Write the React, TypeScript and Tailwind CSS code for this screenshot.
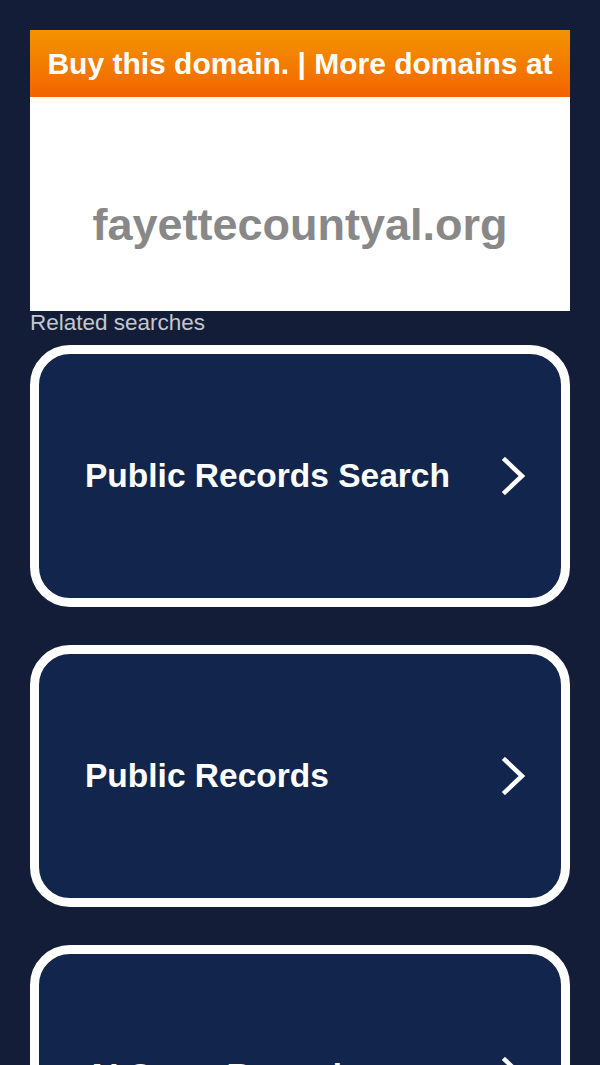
import React from "react";

const items = ["Public Records Search", "Public Records", "AI Court Records"];

function Chevron() {
  return (
    <svg width="28" height="38" viewBox="0 0 28 38" className="shrink-0">
      <path d="M6 3 L23 19 L6 35" fill="none" stroke="white" strokeWidth="4.5" strokeLinecap="square" strokeLinejoin="miter" />
    </svg>
  );
}

export default function App() {
  return (
    <div className="min-h-[1065px] w-full bg-[#131d37] px-[30px] pt-[30px] pb-10" style={{ fontFamily: '"Liberation Sans", Arial, sans-serif' }}>
      <div className="flex h-[67px] items-center justify-center overflow-hidden whitespace-nowrap bg-gradient-to-b from-[#f39400] to-[#f26300] text-[30px] font-bold text-white">
        Buy this domain. | More domains at
      </div>
      <div className="flex h-[214px] items-start justify-center bg-white pt-[101px]">
        <span className="text-[45px] font-bold leading-[54px] text-[#888888]">fayettecountyal.org</span>
      </div>
      <div className="h-[34px] text-[22.5px] leading-[24px] text-[#c3c7cf]">Related searches</div>
      <div className="flex flex-col gap-[38px]">
        {items.map((t) => (
          <div key={t} className="flex h-[262px] items-center justify-between rounded-[40px] border-[9px] border-white bg-[#12264d] pl-[46px] pr-[34px]">
            <span className="text-[33.5px] font-bold text-white">{t}</span>
            <Chevron />
          </div>
        ))}
      </div>
    </div>
  );
}
